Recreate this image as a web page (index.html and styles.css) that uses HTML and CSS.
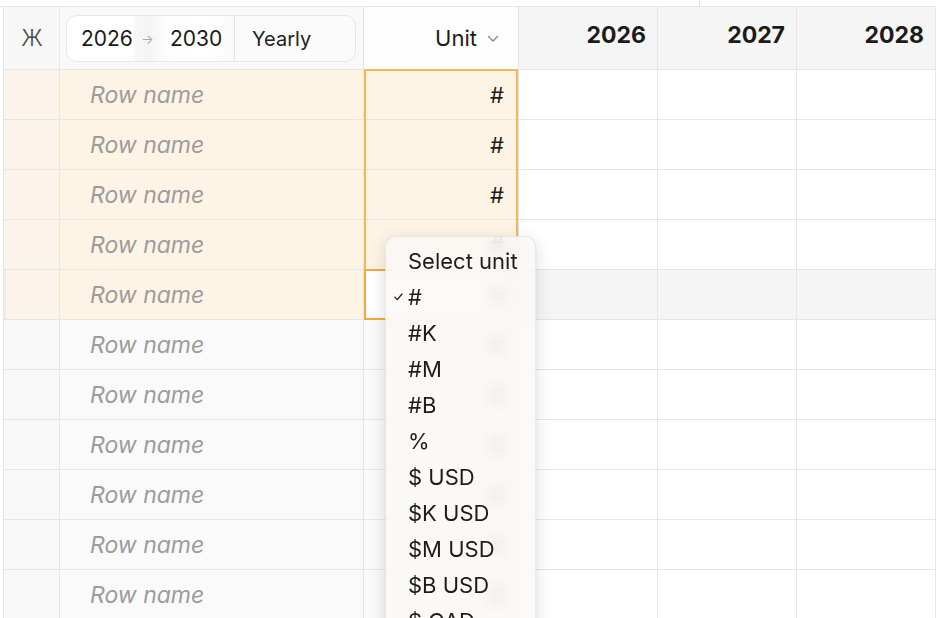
FILE: index.html
```html
<!DOCTYPE html>
<html>
<head>
<meta charset="utf-8">
<link rel="stylesheet" href="styles.css">
</head>
<body>
<div class="page">
  <div class="topstrip"><div class="topstrip-left"></div></div>
  <div class="sheet">
    <div class="grid">
      <div class="cell h-icon">Ж</div>
      <div class="cell h-name">
        <div class="pill">
          <span class="pill-year pill-from">2026</span>
          <span class="pill-arrow">→</span>
          <span class="pill-year pill-to">2030</span>
          <span class="pill-period">Yearly</span>
        </div>
      </div>
      <div class="cell h-unit">Unit <svg class="chev" width="12" height="8" viewBox="0 0 12 8"><polyline points="1.5,1.5 6,6 10.5,1.5" fill="none" stroke="#8a8a8a" stroke-width="1.4" stroke-linecap="round" stroke-linejoin="round"/></svg></div>
      <div class="cell h-year">2026</div>
      <div class="cell h-year">2027</div>
      <div class="cell h-year">2028</div>

      <div class="cell c-icon sel"></div><div class="cell c-name sel">Row name</div><div class="cell c-unit sel">#</div><div class="cell c-year"></div><div class="cell c-year"></div><div class="cell c-year"></div>
      <div class="cell c-icon sel"></div><div class="cell c-name sel">Row name</div><div class="cell c-unit sel">#</div><div class="cell c-year"></div><div class="cell c-year"></div><div class="cell c-year"></div>
      <div class="cell c-icon sel"></div><div class="cell c-name sel">Row name</div><div class="cell c-unit sel">#</div><div class="cell c-year"></div><div class="cell c-year"></div><div class="cell c-year"></div>
      <div class="cell c-icon sel"></div><div class="cell c-name sel">Row name</div><div class="cell c-unit sel">#</div><div class="cell c-year"></div><div class="cell c-year"></div><div class="cell c-year"></div>
      <div class="cell c-icon sel hover-mark"></div><div class="cell c-name sel">Row name</div><div class="cell c-unit active">#</div><div class="cell c-year hover"></div><div class="cell c-year hover"></div><div class="cell c-year hover"></div>
      <div class="cell c-icon"></div><div class="cell c-name">Row name</div><div class="cell c-unit">#</div><div class="cell c-year"></div><div class="cell c-year"></div><div class="cell c-year"></div>
      <div class="cell c-icon"></div><div class="cell c-name">Row name</div><div class="cell c-unit">#</div><div class="cell c-year"></div><div class="cell c-year"></div><div class="cell c-year"></div>
      <div class="cell c-icon"></div><div class="cell c-name">Row name</div><div class="cell c-unit">#</div><div class="cell c-year"></div><div class="cell c-year"></div><div class="cell c-year"></div>
      <div class="cell c-icon"></div><div class="cell c-name">Row name</div><div class="cell c-unit">#</div><div class="cell c-year"></div><div class="cell c-year"></div><div class="cell c-year"></div>
      <div class="cell c-icon"></div><div class="cell c-name">Row name</div><div class="cell c-unit">#</div><div class="cell c-year"></div><div class="cell c-year"></div><div class="cell c-year"></div>
      <div class="cell c-icon"></div><div class="cell c-name">Row name</div><div class="cell c-unit">#</div><div class="cell c-year"></div><div class="cell c-year"></div><div class="cell c-year"></div>
    </div>

    <div class="range-outline"></div>
    <div class="active-outline"></div>

    <div class="menu">
      <div class="menu-title">Select unit</div>
      <div class="menu-item checked"><svg class="check" width="9" height="8" viewBox="0 0 9 8"><polyline points="1,4.2 3.3,6.6 8,1" fill="none" stroke="#222" stroke-width="1.3" stroke-linecap="round" stroke-linejoin="round"/></svg>#</div>
      <div class="menu-item">#K</div>
      <div class="menu-item">#M</div>
      <div class="menu-item">#B</div>
      <div class="menu-item">%</div>
      <div class="menu-item">$ USD</div>
      <div class="menu-item">$K USD</div>
      <div class="menu-item">$M USD</div>
      <div class="menu-item">$B USD</div>
      <div class="menu-item">$ CAD</div>
    </div>
  </div>
</div>
</body>
</html>
```

FILE: styles.css
```css
* { box-sizing: border-box; }
html, body {
  margin: 0;
  padding: 0;
  background: #ffffff;
  font-family: Inter, "Noto Sans", "Liberation Sans", sans-serif;
  color: #1c1c1c;
  overflow: hidden;
}
.page {
  width: 936px;
  height: 618px;
  overflow: hidden;
  position: relative;
}
.topstrip {
  height: 7px;
  border-bottom: 1px solid #e6e6e6;
  display: flex;
}
.topstrip-left {
  width: 700px;
  border-right: 1px solid #e6e6e6;
}
.sheet {
  position: relative;
  padding-left: 3px;
}
.grid {
  display: grid;
  grid-template-columns: 56px 304px 155px 139px 139px 139px;
  grid-template-rows: 63px;
  grid-auto-rows: 50px;
  border-left: 1px solid #e6e6e6;
}
.cell {
  border-right: 1px solid #e6e6e6;
  border-bottom: 1px solid #e6e6e6;
  display: flex;
  align-items: center;
  font-size: 22px;
}
.h-icon {
  background: #f7f7f7;
  justify-content: center;
  color: #4a4a4a;
  font-size: 23px;
  font-weight: 300;
  padding-left: 1px;
}
.h-name {
  background: #f9f9f9;
  padding-left: 6px;
}
.pill {
  width: 290px;
  height: 47px;
  margin-top: 1px;
  border: 1px solid #e7e7e7;
  border-radius: 11px;
  background: #fbfbfb;
  display: flex;
  align-items: center;
  overflow: hidden;
  font-size: 21px;
}
.pill-year {
  height: 100%;
  display: flex;
  align-items: center;
  background: #ffffff;
  color: #1a1a1a;
}
.pill-from {
  padding-left: 14px;
  width: 67px;
}
.pill-arrow {
  height: 100%;
  width: 27px;
  display: flex;
  align-items: center;
  justify-content: center;
  color: #a9a9a9;
  font-size: 13px;
  background: linear-gradient(90deg, #f8f8f8, #f4f4f4, #fafafa);
}
.pill-to {
  padding-left: 9px;
  width: 74px;
  border-right: 1px solid #e4e4e4;
  background: linear-gradient(90deg, #fdfdfd, #ffffff 70%, #f9f9f9);
}
.pill-period {
  padding-left: 17px;
  color: #222;
  font-size: 20px;
}
.h-unit {
  background: #fdfdfd;
  justify-content: flex-end;
  padding-right: 19px;
  gap: 10px;
  color: #1c1c1c;
}
.chev { margin-top: 2px; }
.h-year {
  background: #f5f5f5;
  justify-content: flex-end;
  padding-right: 11px;
  font-weight: 700;
  font-size: 23px;
  color: #1b1b1b;
  padding-bottom: 6px;
}
.c-icon { background: #f8f8f8; }
.c-name {
  background: #fafafa;
  padding-left: 30px;
  font-style: italic;
  font-size: 23px;
  color: #9c9c9c;
}
.c-unit {
  background: #fafafa;
  justify-content: flex-end;
  padding-right: 14px;
  color: #1c1c1c;
}
.c-year { background: #ffffff; }
.c-icon.sel { background: #fcf4ea; }
.c-name.sel, .c-unit.sel { background: #fef4e6; }
.c-unit.active { background: #ffffff; }
.c-year.hover { background: #f5f5f5; }
.hover-mark { box-shadow: inset 3px 0 0 -1px #ececec; }

.range-outline {
  position: absolute;
  left: 364px;
  top: 62px;
  width: 154px;
  height: 251px;
  border: 2px solid #f6b653;
  pointer-events: none;
}
.active-outline {
  position: absolute;
  left: 364px;
  top: 262px;
  width: 154px;
  height: 51px;
  border: 2px solid #f4a93d;
  pointer-events: none;
}
.menu {
  position: absolute;
  left: 385px;
  top: 229px;
  width: 151px;
  height: 420px;
  border-radius: 11px;
  background: rgba(250, 249, 247, 0.8);
  -webkit-backdrop-filter: blur(8px);
  backdrop-filter: blur(8px);
  border: 1px solid rgba(0, 0, 0, 0.07);
  box-shadow: 0 4px 18px rgba(0, 0, 0, 0.13), 0 1px 3px rgba(0, 0, 0, 0.06);
  padding-top: 6px;
  padding-left: 22px;
}
.menu-title {
  height: 36px;
  line-height: 36px;
  font-size: 22px;
  color: #1c1c1c;
}
.menu-item {
  height: 36px;
  line-height: 36px;
  font-size: 22px;
  color: #1c1c1c;
  position: relative;
}
.check {
  position: absolute;
  left: -14px;
  top: 14px;
}
```
